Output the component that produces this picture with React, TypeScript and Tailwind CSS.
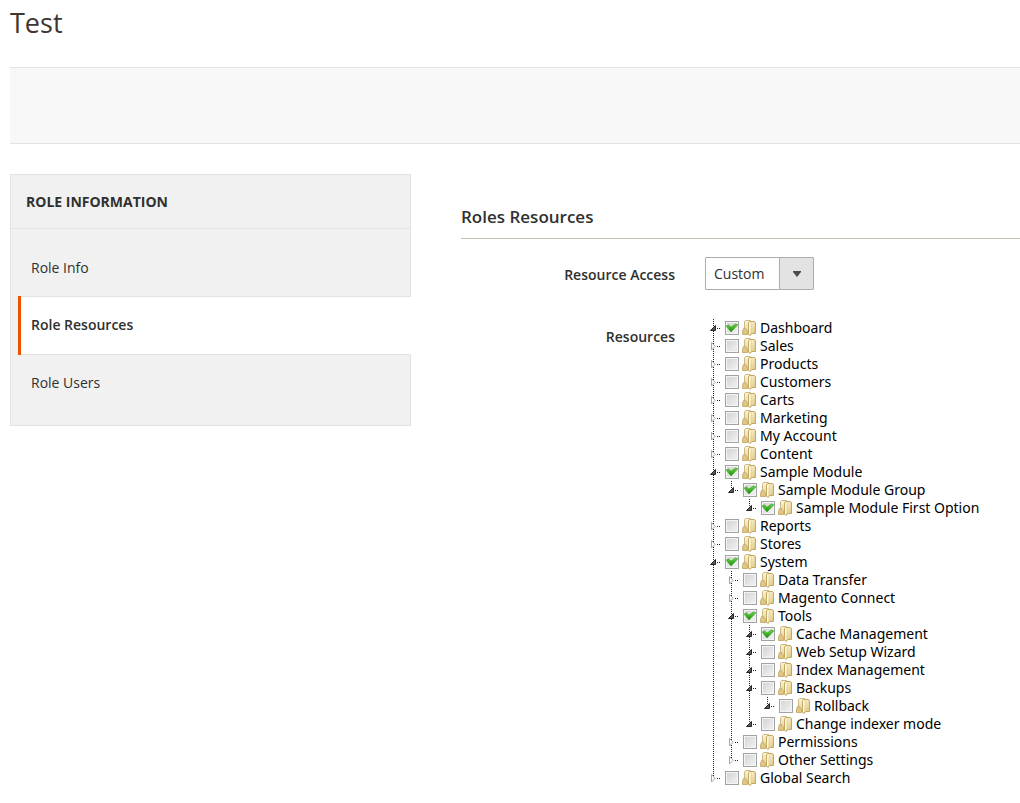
import { useState } from "react";

type TreeItem = {
  label: string;
  checked?: boolean;
  collapsed?: boolean;
  children?: TreeItem[];
};

const resources: TreeItem[] = [
  { label: "Dashboard", checked: true },
  { label: "Sales", collapsed: true },
  { label: "Products", collapsed: true },
  { label: "Customers", collapsed: true },
  { label: "Carts", collapsed: true },
  { label: "Marketing", collapsed: true },
  { label: "My Account", collapsed: true },
  { label: "Content", collapsed: true },
  {
    label: "Sample Module",
    checked: true,
    children: [
      {
        label: "Sample Module Group",
        checked: true,
        children: [{ label: "Sample Module First Option", checked: true }],
      },
    ],
  },
  { label: "Reports", collapsed: true },
  { label: "Stores", collapsed: true },
  {
    label: "System",
    checked: true,
    children: [
      { label: "Data Transfer", collapsed: true },
      { label: "Magento Connect", collapsed: true },
      {
        label: "Tools",
        checked: true,
        children: [
          { label: "Cache Management", checked: true },
          { label: "Web Setup Wizard" },
          { label: "Index Management" },
          { label: "Backups", children: [{ label: "Rollback" }] },
          { label: "Change indexer mode" },
        ],
      },
      { label: "Permissions", collapsed: true },
      { label: "Other Settings", collapsed: true },
    ],
  },
  { label: "Global Search", collapsed: true },
];

function Guide({ line }: { line: boolean }) {
  return (
    <svg className="size-[18px] shrink-0" viewBox="0 0 18 18" aria-hidden="true">
      {line && <path d="M7.5 0V18" stroke="#222" strokeDasharray="1 1" />}
    </svg>
  );
}

function Elbow({ collapsed, last }: { collapsed?: boolean; last: boolean }) {
  return (
    <svg className="size-[18px] shrink-0" viewBox="0 0 18 18" aria-hidden="true">
      <path d={last ? "M7.5 0V9" : "M7.5 0V18"} stroke="#222" strokeDasharray="1 1" />
      <path d="M11 9.5H15" stroke="#222" strokeDasharray="1 1" />
      {collapsed ? (
        <path d="M5.5 5.5V13L9.2 9.3Z" fill="#fff" stroke="#a6a6a6" />
      ) : (
        <path d="M9.5 6.5V11.5H4.5Z" fill="#595959" stroke="#262626" />
      )}
    </svg>
  );
}

function Folder() {
  return (
    <svg className="size-[18px] shrink-0" viewBox="0 0 18 18" aria-hidden="true">
      <defs>
        <linearGradient id="folder-front" x1="0" x2="1" y1="0" y2="1">
          <stop offset="0" stopColor="#fff9de" />
          <stop offset="0.45" stopColor="#f1e3b3" />
          <stop offset="1" stopColor="#d7bc77" />
        </linearGradient>
        <linearGradient id="folder-back" x1="0" x2="0" y1="0" y2="1">
          <stop offset="0" stopColor="#fbf4d4" />
          <stop offset="1" stopColor="#e5cf94" />
        </linearGradient>
      </defs>
      <path d="M2.5 2.5L3.5 1.500H8.500V14.500H2.500Z" fill="url(#folder-back)" stroke="#cdb984" />
      <path d="M1.500 9.500H3.500L5.500 12.500V15.500H0.500V12.500Z" fill="#dfc684" stroke="#c9b072" />
      <path d="M6.500 4L7.500 2.500H12.500L13.500 4V14.500H9.500L8.500 16.200H7.500L6.500 15Z" fill="url(#folder-front)" stroke="#c3a864" />
      <path d="M7.500 4V15" stroke="#fff9de" />
      <path d="M9.500 3.500V14" stroke="#e3cf98" strokeWidth="0.6" />
    </svg>
  );
}

function TreeNode({ item, guides, last }: { item: TreeItem; guides: boolean[]; last: boolean }) {
  const [checked, setChecked] = useState(!!item.checked);
  return (
    <li>
      <label className="flex h-[18px] items-center whitespace-nowrap">
        {guides.map((line, i) => (
          <Guide key={i} line={line} />
        ))}
        <Elbow collapsed={item.collapsed} last={last} />
        <span className="grid h-[18px] w-[18px] shrink-0 grid-cols-[14px] content-center pl-px">
          <input
            type="checkbox"
            checked={checked}
            onChange={() => setChecked(!checked)}
            className="col-start-1 row-start-1 size-[14px] appearance-none border border-[#a3a3a3] bg-linear-to-br from-[#d2d2d2] to-[#f4f4f4] shadow-[inset_0_0_0_1px_#f4f4f4]"
          />
          {checked && (
            <svg className="pointer-events-none col-start-1 row-start-1 size-[14px]" viewBox="0 0 14 14" aria-hidden="true">
              <defs>
                <linearGradient id="tick" x1="0" x2="0" y1="0" y2="1">
                  <stop offset="0" stopColor="#6fd44c" />
                  <stop offset="1" stopColor="#148c06" />
                </linearGradient>
              </defs>
              <path d="M1 5L3.500 3.800L6 6L10.500 2.800L13 3.800L6 11Z" fill="url(#tick)" stroke="#2ea01a" strokeWidth="0.5" />
            </svg>
          )}
        </span>
        <Folder />
        <span>{item.label}</span>
      </label>
      {item.children && <TreeList items={item.children} guides={[...guides, !last]} />}
    </li>
  );
}

function TreeList({ items, guides }: { items: TreeItem[]; guides: boolean[] }) {
  return (
    <ul>
      {items.map((item, i) => (
        <TreeNode key={item.label} item={item} guides={guides} last={i === items.length - 1} />
      ))}
    </ul>
  );
}

export default function App() {
  return (
    <div className="min-h-screen bg-white pb-4 pl-[10px] font-['Open_Sans','Noto_Sans',sans-serif] text-sm text-[#303030]">
      <h1 className="pt-[5px] text-[27px] leading-9 text-[#41362f]">Test</h1>
      <div className="mt-[26px] h-[77px] border-y border-[#e3e3e3] bg-[#f8f8f8]" />

      <div className="mt-[30px] flex items-start gap-[50px]">
        <nav className="w-[401px] shrink-0 border-l border-[#e3e3e3] bg-[#f1f1f1]" aria-label="Role information">
          <h2 className="border-y border-r border-[#e3e3e3] px-[15px] pt-[17px] pb-4 font-bold leading-5">ROLE INFORMATION</h2>
          <ul>
            <li className="border-r border-[#e3e3e3] pt-[10px]">
              <a href="#info" className="block px-5 pt-[19px] pb-[18px] leading-5">Role Info</a>
            </li>
            <li className="pl-[7px]">
              <a href="#resources" aria-current="page" className="flex bg-white font-semibold leading-5">
                <span className="w-[3px] bg-[#eb5202]" />
                <span className="flex-1 border-y border-[#e3e3e3] px-[10px] pt-[18px] pb-[19px]">Role Resources</span>
              </a>
            </li>
            <li className="border-b border-r border-[#e3e3e3] pb-[14px]">
              <a href="#users" className="block px-5 py-[18px] leading-5">Role Users</a>
            </li>
          </ul>
        </nav>

        <main className="min-w-0 flex-1">
          <h2 className="mt-[31px] border-b border-[#cac3b4] pb-[10px] text-[17px] font-semibold leading-[23px]">
            Roles Resources
          </h2>
          <div className="mt-[18px] flex gap-[30px]">
            <label htmlFor="access" className="w-[214px] pt-2 text-right font-semibold leading-5">Resource Access</label>
            <div className="grid">
              <select
                id="access"
                defaultValue="custom"
                className="col-start-1 row-start-1 h-[33px] w-[109px] appearance-none rounded-[1px] border border-[#adadad] bg-white pl-2 text-sm"
              >
                <option value="custom">Custom</option>
                <option value="all">All</option>
              </select>
              <span className="pointer-events-none col-start-1 row-start-1 m-px grid w-[34px] place-items-center justify-self-end border-l border-[#adadad] bg-[#e3e3e3]">
                <svg className="h-[6px] w-2" viewBox="0 0 8 6" aria-hidden="true">
                  <path d="M0 0H8V1L4 6L0 1Z" fill="#514943" />
                </svg>
              </span>
            </div>
          </div>
          <div className="mt-[29px] flex gap-[30px]">
            <span className="w-[214px] shrink-0 pt-2 text-right font-semibold leading-5">Resources</span>
            <div className="pl-px font-['Noto_Sans','Open_Sans',sans-serif] leading-[18px] text-black">
              <TreeList items={resources} guides={[]} />
            </div>
          </div>
        </main>
      </div>
    </div>
  );
}
